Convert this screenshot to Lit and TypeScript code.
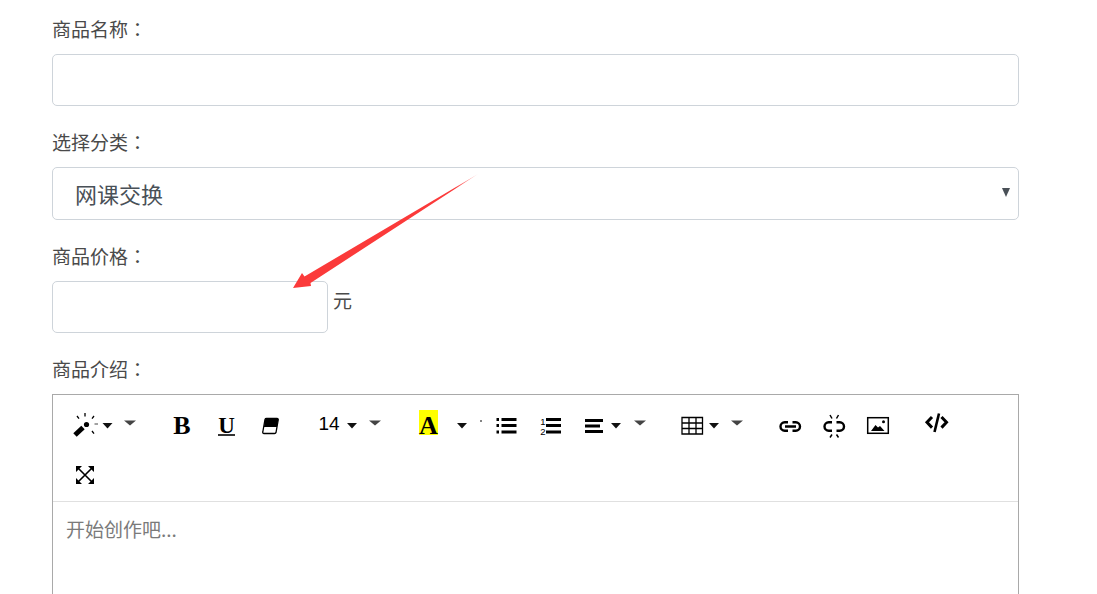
import { LitElement, html, css, svg } from "lit";
import { customElement } from "lit/decorators.js";

type Tool = { c: number; w: number; y: number; art: unknown };

const caret = (c: number, y: number, w = 10, h = 5, fill = "#111"): Tool => ({
  c, w: w + 2, y: 400,
  art: svg`<path d="M${c - w / 2} ${y}h${w}l${-w / 2} ${h}z" fill=${fill}/>`,
});
const grey = (c: number) => caret(c, 420.5, 12, 5, "#444");
const black = (c: number) => caret(c, 423, 10, 5.5);

const row1: Tool[] = [
  { c: 85, w: 28, y: 400, art: svg`
    <path d="M75 435l8-7.500" stroke="#000" stroke-width="5" fill="none"/>
    <circle cx="86.500" cy="424.500" r="2.600" fill="#000"/>
    <path d="M85 413v3.500M77 416l2 2.700M94 416l-2 2.700M92 431l2 2.700" stroke="#000" stroke-width="1.300" fill="none"/>
    <path d="M94.500 424h3.500" stroke="#444" stroke-width="1"/>` },
  black(107.5),
  grey(130),
  { c: 182, w: 22, y: 400, art: svg`<text x="182" y="434" text-anchor="middle" class="serif" font-size="26">B</text>` },
  { c: 226, w: 22, y: 400, art: svg`<text x="226.500" y="432.500" text-anchor="middle" class="serif" font-size="23">U</text><path d="M218 435h17" stroke="#000" stroke-width="1.600"/>` },
  { c: 270.5, w: 18, y: 400, art: svg`
    <path d="M266.500 418.500h10.500q1.500 0 1.200 1.500l-2.200 12.500q-.3 1-1.500 1h-10.500q-1.500 0-1.200-1.500l2.200-12.500q.3-1 1.500-1z" fill="#fff" stroke="#000" stroke-width="1.300"/>
    <path d="M266.500 418.500h10.500q1.500 0 1.200 1.500l-1.300 7h-13l1.100-7q.3-1.500 1.500-1.500z" fill="#000"/>` },
  { c: 329, w: 24, y: 400, art: svg`<text x="329" y="429.500" text-anchor="middle" class="sans" font-size="19">14</text>` },
  black(352),
  grey(375),
  { c: 428.5, w: 22, y: 400, art: svg`<rect x="419" y="410" width="19" height="25" fill="#ff0"/><text x="428.500" y="434" text-anchor="middle" class="serif" font-size="26">A</text>` },
  black(462),
  { c: 481, w: 4, y: 400, art: svg`<rect x="480.400" y="420" width="1.200" height="2" fill="#333"/>` },
  { c: 506.5, w: 22, y: 400, art: svg`
    <path d="M501.500 419.500h15M501.500 425.500h15M501.500 432h15" stroke="#000" stroke-width="3"/>
    <path d="M496.500 419.500h2.500M496.500 425.500h2.500M496.500 432h2.500" stroke="#000" stroke-width="3"/>` },
  { c: 550.5, w: 24, y: 400, art: svg`
    <path d="M546 419.500h15M546 425.500h15M546 432h15" stroke="#000" stroke-width="3"/>
    <text x="543" y="425" text-anchor="middle" class="sans" font-size="9.500">1</text>
    <text x="543" y="434.500" text-anchor="middle" class="sans" font-size="9.500">2</text>` },
  { c: 594.5, w: 20, y: 400, art: svg`<path d="M585 420.500h18M585 426h15M585 431.500h18" stroke="#000" stroke-width="2.800"/>` },
  black(616),
  grey(640),
  { c: 692.5, w: 24, y: 400, art: svg`<path d="M682 417.500h20.500v16.500h-20.500zM689 417.500v16.500M696 417.500v16.500M682 423h20.500M682 428.500h20.500" fill="none" stroke="#000" stroke-width="1.300"/>` },
  black(714),
  grey(737),
  { c: 790.5, w: 26, y: 400, art: svg`<path d="M788 422.300h-3.300a4.200 4.200 0 0 0 0 8.400h3.300M792.500 422.300h3.300a4.200 4.200 0 0 1 0 8.400h-3.300M785 426.500h11" fill="none" stroke="#000" stroke-width="2.400"/>` },
  { c: 834.5, w: 26, y: 400, art: svg`
    <path d="M832 422.300h-3.300a4.200 4.200 0 0 0 0 8.400h3.300M836.500 422.300h3.300a4.200 4.200 0 0 1 0 8.400h-3.300" fill="none" stroke="#000" stroke-width="2.400"/>
    <path d="M830 415l2 3.500M838.500 415l-2 3.500M832 434.500l-2 3M836.500 434.500l2 3" stroke="#000" stroke-width="1.500"/>` },
  { c: 878, w: 26, y: 400, art: svg`
    <rect x="867.700" y="417.700" width="20.600" height="15.600" fill="#fff" stroke="#000" stroke-width="1.500"/>
    <path d="M871 431l4.500-6 2.500 2.500 2-1.500 4.500 5z" fill="#000"/><circle cx="883.500" cy="421.800" r="1.500" fill="#000"/>` },
  { c: 936.5, w: 28, y: 400, art: svg`<path d="M932 417l-5 5.300 5 5.300M941.500 417l5 5.300-5 5.300" fill="none" stroke="#000" stroke-width="3"/><path d="M939 413.500l-4.500 18.500" stroke="#000" stroke-width="2.600"/>` },
];

const row2: Tool[] = [
  { c: 85, w: 22, y: 450, art: svg`
    <path d="M78.500 468.500l13 13M91.500 468.500l-13 13" stroke="#000" stroke-width="1.600"/>
    <path d="M76 466h6l-6 6zM94 466h-6l6 6zM76 484h6l-6-6zM94 484h-6l6-6z" fill="#000"/>` },
];

const rowView = (tools: Tool[]) => {
  let right = 53;
  return tools.map((t) => {
    const left = Math.floor(t.c - t.w / 2);
    const gap = left - right;
    right = left + t.w;
    return html`<svg class="tool" style="margin-left:${gap}px" width=${t.w} height="50" viewBox="${left} ${t.y} ${t.w} 50">${t.art}</svg>`;
  });
};

@customElement("app-root")
export class AppRoot extends LitElement {
  static styles = css`
    :host {
      display: block;
      position: relative;
      height: 594px;
      overflow: hidden;
      background: #fff;
      font-family: "Noto Sans CJK SC", "Liberation Sans", sans-serif;
      color: #495057;
    }
    .form {
      width: 967px;
      padding: 15px 0 0 52px;
    }
    .group {
      margin-bottom: 22px;
    }
    .label {
      display: block;
      height: 28px;
      line-height: 28px;
      margin-bottom: 11px;
      font-size: 19px;
      color: #4a4a4a;
    }
    .colon {
      font-family: "Noto Sans CJK TC", sans-serif;
    }
    .control {
      display: block;
      box-sizing: border-box;
      width: 100%;
      height: 52px;
      border: 1px solid #ced4da;
      border-radius: 5px;
      background: #fff;
      outline: none;
      padding: 0 22px;
      font: inherit;
      color: inherit;
    }
    .select-wrap {
      position: relative;
    }
    select.control {
      height: 53px;
      padding-bottom: 2px;
      font-size: 22px;
      appearance: none;
      -webkit-appearance: none;
    }
    .select-caret {
      position: absolute;
      right: 9px;
      top: 21px;
      border-style: solid;
      border-width: 9px 4px 0;
      border-color: #495057 transparent transparent;
    }
    .price {
      display: flex;
      align-items: center;
      gap: 5px;
    }
    .price .control {
      width: 276px;
    }
    .unit {
      font-size: 19px;
      line-height: 28px;
      padding-bottom: 14px;
      color: #4a4a4a;
    }
    .editor {
      box-sizing: border-box;
      height: 400px;
      border: 1px solid #a9a9a9;
    }
    .toolbar {
      padding-top: 5px;
      height: 101px;
      border-bottom: 1px solid #e0e0e0;
    }
    .row {
      display: flex;
      height: 50px;
    }
    .tool {
      display: block;
      flex: none;
    }
    .serif {
      font-family: "Liberation Serif", serif;
      font-weight: 700;
    }
    .sans {
      font-family: "Liberation Sans", sans-serif;
    }
    .placeholder {
      padding: 13px 13px;
      font-size: 19px;
      line-height: 28px;
      color: #7a7a7a;
    }
    .arrow {
      position: absolute;
      left: 0;
      top: 0;
      pointer-events: none;
    }
  `;

  render() {
    return html`
      <div class="form">
        <div class="group">
          <label class="label">商品名称<span class="colon">：</span></label>
          <input class="control" type="text" />
        </div>
        <div class="group">
          <label class="label">选择分类<span class="colon">：</span></label>
          <div class="select-wrap">
            <select class="control"><option>网课交换</option></select>
            <span class="select-caret"></span>
          </div>
        </div>
        <div class="group">
          <label class="label">商品价格<span class="colon">：</span></label>
          <div class="price">
            <input class="control" type="text" />
            <span class="unit">元</span>
          </div>
        </div>
        <div class="group">
          <label class="label">商品介绍<span class="colon">：</span></label>
          <div class="editor">
            <div class="toolbar">
              <div class="row">${rowView(row1)}</div>
              <div class="row">${rowView(row2)}</div>
            </div>
            <div class="placeholder">开始创作吧...</div>
          </div>
        </div>
      </div>
      <svg class="arrow" width="1097" height="594" viewBox="0 0 1097 594">
        <defs>
          <linearGradient id="fade" gradientUnits="userSpaceOnUse" x1="478" y1="174" x2="455" y2="189">
            <stop offset="0" stop-color="#fb3a3a" stop-opacity="0.3" />
            <stop offset="1" stop-color="#fb3a3a" />
          </linearGradient>
        </defs>
        <path d="M478 174L310.500 283L311 286L293 288L302 273L304.500 276.500Z" fill="url(#fade)" />
      </svg>
    `;
  }
}
